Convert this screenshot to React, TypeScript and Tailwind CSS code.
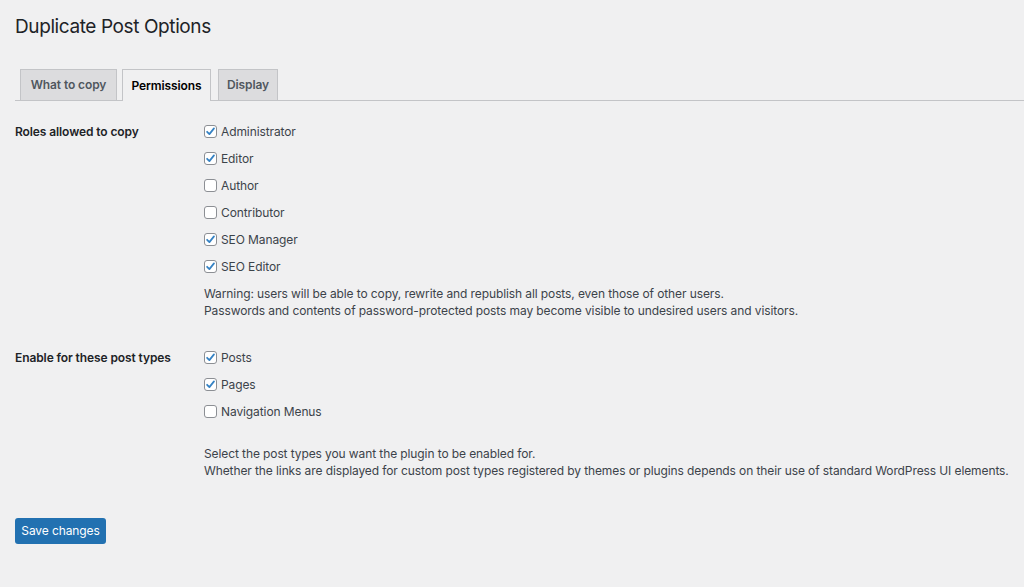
import React from "react";

const Check = ({ checked }: { checked: boolean }) => (
  <span className="w-[13px] h-[13px] shrink-0 rounded-[3px] border border-[#8c8f94] bg-white flex items-center justify-center mr-[4px]">
    {checked && (
      <svg width="11" height="11" viewBox="0 0 12 12">
        <path d="M2.3 6.3 L4.8 8.9 L9.8 2.6" fill="none" stroke="#3582c4" strokeWidth="1.9" strokeLinecap="round" strokeLinejoin="round" />
      </svg>
    )}
  </span>
);

const Row = ({ label, checked }: { label: string; checked: boolean }) => (
  <label className="h-[27px] flex items-center text-[12px] tracking-[-0.1px] text-[#3c434a]">
    <Check checked={checked} />
    <span>{label}</span>
  </label>
);

export default function App() {
  const font = { fontFamily: "Inter, 'Liberation Sans', sans-serif" };
  return (
    <div className="min-h-[587px] w-[1024px] bg-[#f0f0f1] overflow-hidden" style={font}>
      <div className="pl-[15px]">
        <h1 className="text-[19px] leading-[26px] text-[#1d2327] font-normal pt-[14px] tracking-[-0.4px]">Duplicate Post Options</h1>
        <div className="mt-[30px] flex items-end h-[31px] border-b border-[#c3c4c7] pl-[5px]">
          <div className="w-[97px] h-[31px] flex items-center justify-center text-[12px] tracking-[-0.1px] font-semibold text-[#50575e] bg-[#dcdcde] border border-b-0 border-[#c3c4c7]">What to copy</div>
          <div className="ml-[5px] w-[89px] h-[32px] -mb-px flex items-center justify-center text-[12px] tracking-[-0.1px] font-semibold text-black bg-[#f0f0f1] border border-b-0 border-[#c3c4c7]">Permissions</div>
          <div className="ml-[7px] w-[60px] h-[31px] flex items-center justify-center text-[12px] tracking-[-0.1px] font-semibold text-[#50575e] bg-[#dcdcde] border border-b-0 border-[#c3c4c7]">Display</div>
        </div>

        <div className="flex mt-[17px]">
          <div className="w-[189px] shrink-0 h-[27px] flex items-center text-[12px] tracking-[-0.1px] font-semibold text-[#1d2327]">Roles allowed to copy</div>
          <div className="flex flex-col">
            <Row label="Administrator" checked />
            <Row label="Editor" checked />
            <Row label="Author" checked={false} />
            <Row label="Contributor" checked={false} />
            <Row label="SEO Manager" checked />
            <Row label="SEO Editor" checked />
            <p className="mt-[5px] text-[12px] tracking-[-0.1px] leading-[17px] text-[#3c434a]">
              Warning: users will be able to copy, rewrite and republish all posts, even those of other users.
              <br />
              Passwords and contents of password-protected posts may become visible to undesired users and visitors.
            </p>
          </div>
        </div>

        <div className="flex mt-[25px]">
          <div className="w-[189px] shrink-0 h-[27px] flex items-center text-[12px] tracking-[-0.1px] font-semibold text-[#1d2327]">Enable for these post types</div>
          <div className="flex flex-col">
            <Row label="Posts" checked />
            <Row label="Pages" checked />
            <Row label="Navigation Menus" checked={false} />
            <p className="mt-[20px] text-[12px] tracking-[-0.1px] leading-[17px] text-[#3c434a] whitespace-nowrap">
              Select the post types you want the plugin to be enabled for.
              <br />
              Whether the links are displayed for custom post types registered by themes or plugins depends on their use of standard WordPress UI elements.
            </p>
          </div>
        </div>

        <button className="mt-[39px] w-[91px] h-[26px] rounded-[3px] bg-[#2271b1] text-white text-[12px] tracking-[-0.1px] flex items-center justify-center">
          Save changes
        </button>
      </div>
    </div>
  );
}
